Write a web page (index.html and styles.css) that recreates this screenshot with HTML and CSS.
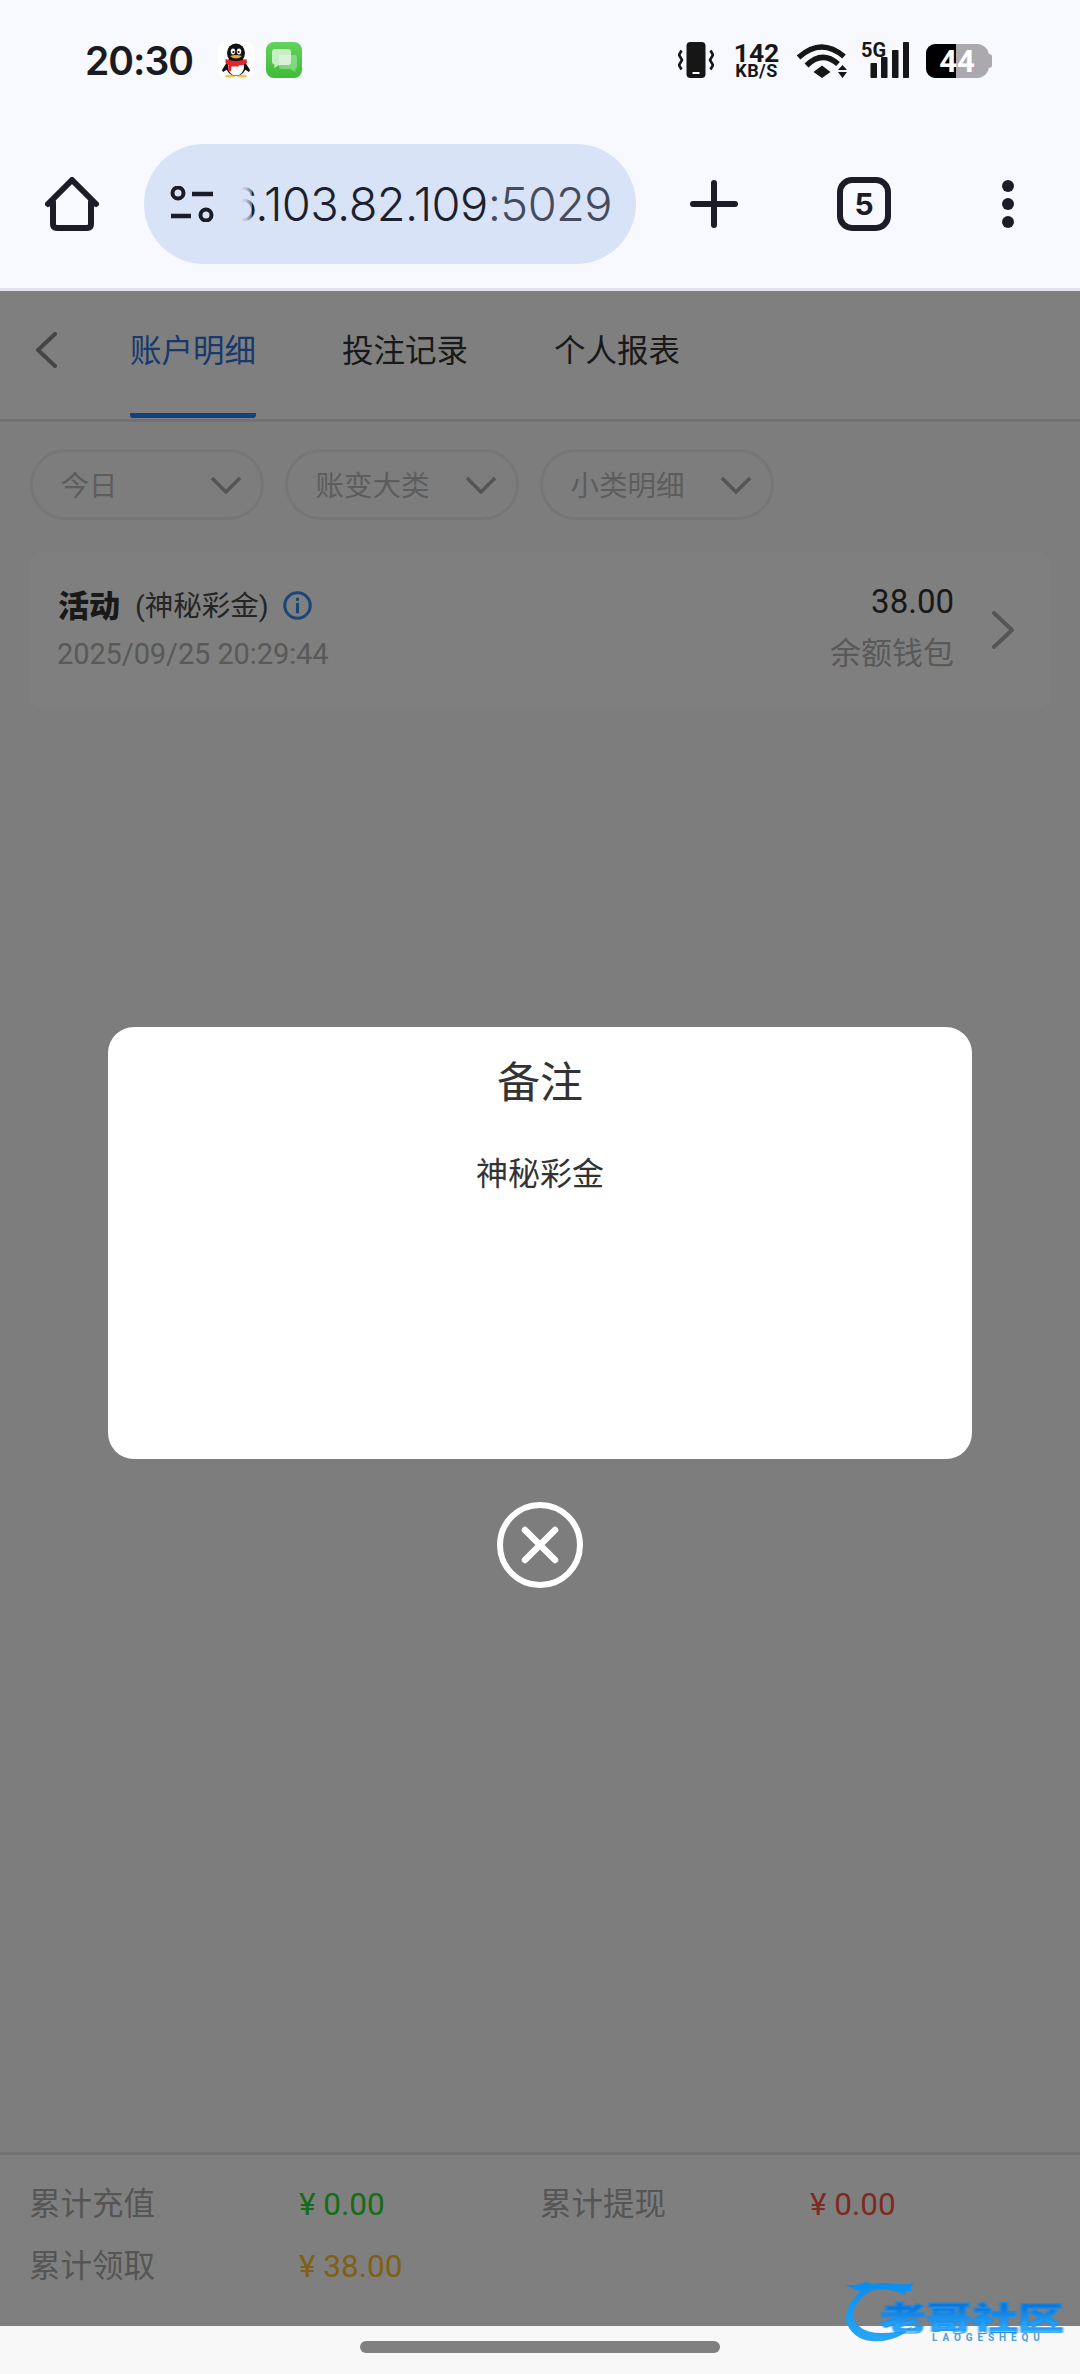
FILE: index.html
```html
<!DOCTYPE html>
<html lang="zh-CN">
<head>
<meta charset="utf-8">
<title>账户明细</title>
<link rel="stylesheet" href="styles.css">
</head>
<body>
<header class="chrome">
  <div class="status">
    <div class="status-left">
      <span class="time">20:30</span>
      <svg class="app-icon qq" viewBox="0 0 36 36">
        <rect width="36" height="36" rx="7" fill="#fff"/>
        <ellipse cx="12" cy="34" rx="5" ry="1.6" fill="#f2c84b"/>
        <ellipse cx="24" cy="34" rx="5" ry="1.6" fill="#f2c84b"/>
        <path d="M9 20 4 28l1 2 5-3zM27 20l5 8-1 2-5-3z" fill="#111"/>
        <ellipse cx="18" cy="24" rx="10" ry="10" fill="#111"/>
        <ellipse cx="18" cy="25" rx="8" ry="8.6" fill="#fff"/>
        <ellipse cx="18" cy="11" rx="9" ry="9.6" fill="#111"/>
        <ellipse cx="15" cy="9.5" rx="2.2" ry="3" fill="#fff"/>
        <ellipse cx="21" cy="9.5" rx="2.2" ry="3" fill="#fff"/>
        <circle cx="15.4" cy="10" r="1.1" fill="#111"/>
        <circle cx="20.6" cy="10" r="1.1" fill="#111"/>
        <path d="M12 14q6-2 12 0-6 5-12 0z" fill="#f5a623"/>
        <path d="M7.500 17q10.500 4 21 0l.5 4q-5 2.500-8 2.500l-.5 1h-7l-.5 5-3-1.500.5-5q-2.500-1-3-2z" fill="#e1272c"/>
      </svg>
      <svg class="app-icon" viewBox="0 0 36 36">
        <defs><linearGradient id="msg" x1="0" y1="0" x2="0" y2="1"><stop offset="0" stop-color="#63d35c"/><stop offset="1" stop-color="#3fbb38"/></linearGradient></defs>
        <rect width="36" height="36" rx="8" fill="url(#msg)"/>
        <path d="M13 13h15q3 0 3 3v9q0 2-2 2l1 3-6-3H16q-3 0-3-3z" fill="#fff" opacity=".3"/>
        <path d="M9 7h13q3 0 3 3v10q0 3-3 3H13l-5 3 .5-3.500Q6 22 6 20V10q0-3 3-3z" fill="#fff" opacity=".68"/>
      </svg>
    </div>
    <div class="status-right">
      <svg class="s-vibrate" viewBox="0 0 36 36">
        <rect x="8.500" y="0" width="19" height="36" rx="4" fill="#161616"/>
        <rect x="14.500" y="30" width="7" height="2" fill="#fff"/>
        <path d="M3.500 8.500 1 13 4 18 1 23 3.500 27.500M32.500 8.500 35 13l-3 5 3 5-2.500 4.500" fill="none" stroke="#161616" stroke-width="2.600" stroke-linejoin="round"/>
      </svg>
      <div class="speed"><span class="speed-num">142</span><span class="speed-unit">KB/S</span></div>
      <svg class="s-wifi" viewBox="0 0 50 35">
        <path d="M1.500 14.500Q24-6 47 13.500" fill="none" stroke="#161616" stroke-width="5.500"/>
        <path d="M9.500 22.500Q25 7 41 21" fill="none" stroke="#161616" stroke-width="5.500"/>
        <path d="M16.500 29l8.500-6.500 8.500 6.500-8.500 6z" fill="#161616"/>
        <path d="M41 27l4.500-5 4.500 5zM41 29h9l-4.500 6z" fill="#161616"/>
      </svg>
      <svg class="s-signal" viewBox="0 0 48 36">
        <text x="0" y="15" class="s-5g">5G</text>
        <rect x="9.500" y="21" width="6.500" height="15" rx=".8" fill="#161616"/>
        <rect x="20" y="15" width="6.500" height="21" rx=".8" fill="#161616"/>
        <rect x="31" y="8" width="6.500" height="28" rx=".8" fill="#161616"/>
        <rect x="42" y="0" width="6" height="36" rx=".8" fill="#161616"/>
      </svg>
      <div class="battery">
        <span class="battery-text">44</span>
      </div>
    </div>
  </div>
  <div class="toolbar">
    <svg class="t-home" viewBox="0 0 54 54">
      <path d="M3 27 27 3l24 24M8 25v22q0 4 4 4h30q4 0 4-4V25" fill="none" stroke="#1b1c28" stroke-width="6" stroke-linecap="round" stroke-linejoin="round"/>
    </svg>
    <div class="url-pill">
      <svg class="t-tune" viewBox="0 0 44 36">
        <circle cx="8" cy="7" r="5.500" fill="none" stroke="#1b1c28" stroke-width="4"/>
        <path d="M22 8h21M1 30h20" stroke="#1b1c28" stroke-width="4.500"/>
        <circle cx="36" cy="29" r="5.500" fill="none" stroke="#1b1c28" stroke-width="4"/>
      </svg>
      <div class="url"><span class="host">6.103.82.109</span><span class="port">:5029</span></div>
      <div class="url-fade"></div>
    </div>
    <svg class="t-plus" viewBox="0 0 48 48">
      <path d="M24 3v42M3 24h42" stroke="#1b1c28" stroke-width="6" stroke-linecap="round"/>
    </svg>
    <div class="t-tabs">5</div>
    <div class="t-dots"><i></i><i></i><i></i></div>
  </div>
</header>

<main class="page">
  <nav class="tabs">
    <svg class="back" viewBox="0 0 22 36"><path d="M20 2 3 18l17 16" fill="none" stroke="#8a8a8a" stroke-width="4" stroke-linecap="round" stroke-linejoin="round"/></svg>
    <a class="tab active">账户明细</a>
    <a class="tab">投注记录</a>
    <a class="tab">个人报表</a>
  </nav>

  <div class="filters">
    <div class="pill"><span>今日</span><svg class="caret" viewBox="0 0 32 18"><path d="M2 2l14 14L30 2" fill="none" stroke="#aaa" stroke-width="3.500"/></svg></div>
    <div class="pill"><span>账变大类</span><svg class="caret" viewBox="0 0 32 18"><path d="M2 2l14 14L30 2" fill="none" stroke="#aaa" stroke-width="3.500"/></svg></div>
    <div class="pill"><span>小类明细</span><svg class="caret" viewBox="0 0 32 18"><path d="M2 2l14 14L30 2" fill="none" stroke="#aaa" stroke-width="3.500"/></svg></div>
  </div>

  <section class="card">
    <div class="card-main">
      <div class="card-title">
        <b>活动</b><span class="card-note">(神秘彩金)</span>
        <svg class="info" viewBox="0 0 28 28"><circle cx="14" cy="14" r="12.300" fill="none" stroke="#3a8cf0" stroke-width="3"/><rect x="12.500" y="11.500" width="3" height="10" fill="#3a8cf0"/><rect x="12.500" y="6.500" width="3" height="3" fill="#3a8cf0"/></svg>
      </div>
      <div class="card-date">2025/09/25 20:29:44</div>
    </div>
    <div class="card-side">
      <div class="card-amount">38.00</div>
      <div class="card-wallet">余额钱包</div>
    </div>
    <svg class="more" viewBox="0 0 24 38"><path d="M3 2l18 17L3 36" fill="none" stroke="#aaa" stroke-width="4" stroke-linecap="round" stroke-linejoin="round"/></svg>
  </section>

  <div class="spacer"></div>

  <section class="summary">
    <span class="s-label">累计充值</span><span class="s-val green">¥ 0.00</span>
    <span class="s-label">累计提现</span><span class="s-val red">¥ 0.00</span>
    <span class="s-label">累计领取</span><span class="s-val gold">¥ 38.00</span>
  </section>

  <div class="overlay">
    <div class="modal">
      <h2 class="modal-title">备注</h2>
      <p class="modal-body">神秘彩金</p>
    </div>
    <svg class="close" viewBox="0 0 86 86">
      <circle cx="43" cy="43" r="40" fill="none" stroke="#fff" stroke-width="6"/>
      <path d="M28 28l30 30M58 28 28 58" stroke="#fff" stroke-width="6.500" stroke-linecap="round"/>
    </svg>
  </div>
</main>

<footer class="gesture"><div class="handle"></div></footer>

<div class="watermark">
  <svg class="wm-dragon" viewBox="0 0 100 70">
    <defs><linearGradient id="wm" x1="0" y1="0" x2="0" y2="1"><stop offset="0" stop-color="#0a8cf0"/><stop offset="1" stop-color="#2aa6f5"/></linearGradient></defs>
    <path d="M0 5q14 1 22-3l6 2q12-2 26 0 10 1 17-1l-3 5 2 3-8 1 2 4q-10-5-20-6-14-2-24 6Q8 28 9 38q2 10 16 15 20 5 45-5-14 14-36 15Q12 64 3 46-3 30 16 12 8 9 0 5z" fill="url(#wm)"/>
  </svg>
  <div class="wm-text">老哥社区</div>
  <div class="wm-sub">LAOGESHEQU</div>
</div>
</body>
</html>
```

FILE: styles.css
```css
* { box-sizing: border-box; }
html, body { margin: 0; padding: 0; }
body {
  width: 1080px;
  height: 2374px;
  display: flex;
  flex-direction: column;
  position: relative;
  overflow: hidden;
  font-family: Roboto, "Noto Sans CJK SC", sans-serif;
  background: #fafafa;
}

/* Browser chrome */
.chrome {
  flex: none;
  height: 291px;
  background: #f8f9ff;
  border-bottom: 3px solid #e3e4ee;
}
.status {
  height: 120px;
  display: flex;
  justify-content: space-between;
  align-items: center;
  padding: 0 88px 0 85px;
}
.status-left, .status-right { display: flex; align-items: center; }
.time {
  flex: none;
  width: 133px;
  font-family: Inter, sans-serif;
  font-size: 39px;
  font-weight: 600;
  color: #1a1b22;
  letter-spacing: -1px;
}
.app-icon { width: 36px; height: 36px; display: block; }
.app-icon.qq { margin-right: 12px; }
.s-vibrate { width: 36px; height: 36px; margin-right: 20px; }
.speed { display: flex; flex-direction: column; align-items: center; width: 45px; height: 36px; margin-right: 18px; color: #161616; font-weight: 700; }
.speed-num { font-size: 26.500px; line-height: 21px; height: 21px; }
.speed-unit { font-size: 18px; line-height: 15px; height: 15px; letter-spacing: .4px; }
.s-wifi { width: 50px; height: 35px; margin-right: 14px; }
.s-signal { width: 48px; height: 36px; margin-right: 17px; overflow: visible; }
.s-5g { font-family: Roboto, sans-serif; font-weight: 700; font-size: 20px; fill: #161616; }
.battery {
  position: relative;
  width: 63px;
  height: 34px;
  margin-right: 3px;
  border-radius: 9px 12px 12px 9px;
  background: linear-gradient(90deg, #000 0 30px, #aba9ae 30px);
  display: flex;
  align-items: center;
  justify-content: center;
  margin-top: 2px;
}
.battery::after {
  content: "";
  position: absolute;
  right: -3px;
  top: 10px;
  width: 3px;
  height: 14px;
  border-radius: 0 3px 3px 0;
  background: #aba9ae;
}
.battery-text { font-size: 31px; font-weight: 700; color: #fff; line-height: 1; margin-left: -1px; }

.toolbar {
  height: 168px;
  display: flex;
  align-items: center;
  padding-left: 45px;
}
.t-home { width: 54px; height: 54px; flex: none; }
.url-pill {
  position: relative;
  flex: none;
  width: 492px;
  height: 120px;
  margin-left: 45px;
  border-radius: 60px;
  background: #d9e3f7;
  display: flex;
  align-items: center;
  overflow: hidden;
  padding-left: 26px;
}
.t-tune { width: 44px; height: 36px; flex: none; }
.url {
  position: absolute;
  right: 24px;
  top: 0;
  height: 120px;
  line-height: 120px;
  font-family: Inter, sans-serif;
  font-size: 47px;
  font-weight: 300;
  letter-spacing: -.6px;
  white-space: nowrap;
}
.host { color: #1c1f2e; }
.port { color: #454b5e; }
.url-fade {
  position: absolute;
  left: 71px;
  top: 0;
  width: 37px;
  height: 120px;
  background: linear-gradient(90deg, #d9e3f7 70%, rgba(217, 227, 247, .82) 85%, rgba(217, 227, 247, .4));
}
.t-plus { width: 48px; height: 48px; margin-left: 54px; flex: none; }
.t-tabs {
  flex: none;
  width: 54px;
  height: 54px;
  margin-left: 99px;
  border: 6px solid #1b1c28;
  border-radius: 15px;
  display: flex;
  align-items: center;
  justify-content: center;
  font-family: Inter, sans-serif;
  font-size: 30px;
  font-weight: 700;
  color: #1b1c28;
}
.t-dots { flex: none; margin-left: 111px; display: flex; flex-direction: column; gap: 6px; }
.t-dots i { display: block; width: 12px; height: 12px; border-radius: 50%; background: #1b1c28; }

/* Page */
.page {
  position: relative;
  flex: 1;
  display: flex;
  flex-direction: column;
  background: #fafafa;
}
.tabs {
  flex: none;
  height: 131px;
  display: flex;
  align-items: stretch;
  background: #fff;
  border-bottom: 3px solid #e4e4e4;
  padding-left: 35px;
}
.back { width: 22px; height: 36px; flex: none; align-self: center; margin: 0 73px 0 0; position: relative; top: -5px; }
.tab {
  width: 126px;
  margin-right: 86px;
  height: 127px;
  padding-top: 39px;
  font-size: 31.500px;
  line-height: 44px;
  color: #333;
  white-space: nowrap;
}
.tab.active {
  color: #2f72d6;
  border-bottom: 5px solid #2686ff;
  border-radius: 0 0 3px 3px;
}

.filters {
  flex: none;
  display: flex;
  gap: 20.500px;
  padding: 27px 0 0 29.500px;
}
.pill {
  width: 234.500px;
  height: 71px;
  border: 3px solid #ececec;
  border-radius: 36px;
  display: flex;
  align-items: center;
  justify-content: space-between;
  padding: 0 19px 0 28px;
  font-size: 28.500px;
  color: #bbb;
}
.pill span { position: relative; top: -1px; }
.caret { width: 32px; height: 18px; flex: none; }

.card {
  flex: none;
  height: 155px;
  margin: 32px 30px 0 29px;
  background: #fff;
  border-radius: 12px;
  display: flex;
  align-items: center;
  padding: 0 35px 0 29px;
}
.card-main { flex: 1; }
.card-title { display: flex; align-items: center; height: 44px; margin-top: -4px; }
.card-title b { font-size: 31px; font-weight: 900; color: #333; }
.card-note { font-size: 28.500px; color: #4a4a4a; margin-left: 15px; }
.info { width: 29px; height: 29px; margin-left: 14px; margin-top: 3px; }
.card-date { font-size: 29px; line-height: 40px; color: #b2b2b2; margin-top: 8px; margin-left: -1px; letter-spacing: -.1px; }
.card-side { text-align: right; margin-right: 37px; }
.card-amount { font-size: 33px; line-height: 44px; color: #333; margin-top: -4px; }
.card-wallet { font-size: 31px; line-height: 44px; color: #b2b2b2; margin-top: 8px; }
.more { width: 24px; height: 38px; flex: none; }

.spacer { flex: 1; }
.summary {
  flex: none;
  height: 174px;
  background: #fff;
  border-top: 3px solid #e4e4e4;
  padding: 28px 0 0 29px;
  display: grid;
  grid-template-columns: 270px 241px 270px 1fr;
  grid-auto-rows: 62px;
  align-items: start;
}
.s-label { font-size: 31.500px; line-height: 44px; color: #aaa; }
.s-val { font-size: 31.500px; line-height: 44px; }
.green { color: #2ed62e; }
.red { color: #fa5444; }
.gold { color: #ffc02c; }

/* Dim layer with dialog */
.overlay {
  position: absolute;
  inset: 0;
  padding-bottom: 2px;
  background: rgba(0, 0, 0, .5);
  display: flex;
  flex-direction: column;
  align-items: center;
  justify-content: center;
}
.modal {
  width: 864px;
  height: 432px;
  margin-bottom: 43px;
  background: #fff;
  border-radius: 26px;
  text-align: center;
  color: #333;
}
.modal-title { margin: 0; padding-top: 26px; font-size: 43px; font-weight: 400; line-height: 60px; }
.modal-body { margin: 0; padding-top: 39px; font-size: 32px; line-height: 44px; }
.close { width: 86px; height: 86px; display: block; }

/* Bottom gesture bar */
.gesture {
  flex: none;
  height: 48px;
  background: #f8f8f8;
  display: flex;
  justify-content: center;
  padding-top: 15px;
}
.handle { width: 360px; height: 12px; border-radius: 6px; background: #808080; }

/* Watermark */
.watermark {
  position: absolute;
  left: 843px;
  top: 2280px;
  width: 224px;
  height: 68px;
}
.wm-dragon { position: absolute; left: 0; top: 0; width: 100px; height: 68px; filter: blur(.5px); }
.wm-text {
  position: absolute;
  left: 37px;
  top: 13px;
  height: 46px;
  font-family: "Noto Sans CJK SC", sans-serif;
  font-size: 46px;
  font-weight: 900;
  line-height: 46px;
  white-space: nowrap;
  transform: scaleY(.68);
  background: linear-gradient(180deg, #0d76d8 25%, #2aa8ff 85%);
  -webkit-background-clip: text;
  background-clip: text;
  color: transparent;
  -webkit-text-stroke: 1.500px #1a90ee;
  filter: blur(.8px);
}
.wm-sub {
  position: absolute;
  left: 89px;
  top: 53px;
  font-size: 10px;
  font-weight: 700;
  line-height: 10px;
  letter-spacing: 4.900px;
  color: #4f9fd8;
  white-space: nowrap;
}
```
